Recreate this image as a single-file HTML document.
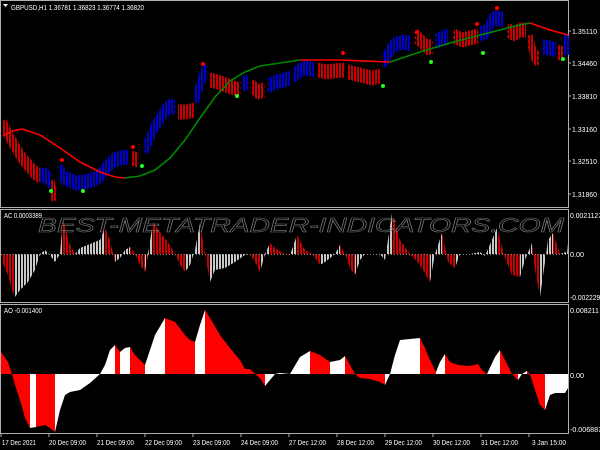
<!DOCTYPE html>
<html><head><meta charset="utf-8"><style>
html,body{margin:0;padding:0;background:#000;}
svg{display:block}
text{font-family:"Liberation Sans",sans-serif;font-size:7.5px;fill:#fff}
</style></head><body>
<svg width="600" height="450" viewBox="0 0 600 450" xmlns="http://www.w3.org/2000/svg">
<defs>
<linearGradient id="aog" gradientUnits="userSpaceOnUse" x1="0" y1="0" x2="600" y2="0">
<stop offset="0" stop-color="#f00"/><stop offset="0.05" stop-color="#f00"/>
<stop offset="0.05" stop-color="#fff"/><stop offset="0.06" stop-color="#fff"/>
<stop offset="0.06" stop-color="#f00"/><stop offset="0.0917" stop-color="#f00"/>
<stop offset="0.0917" stop-color="#fff"/><stop offset="0.1917" stop-color="#fff"/>
<stop offset="0.1917" stop-color="#f00"/><stop offset="0.2" stop-color="#f00"/>
<stop offset="0.2" stop-color="#fff"/><stop offset="0.2167" stop-color="#fff"/>
<stop offset="0.2167" stop-color="#f00"/><stop offset="0.2417" stop-color="#f00"/>
<stop offset="0.2417" stop-color="#fff"/><stop offset="0.275" stop-color="#fff"/>
<stop offset="0.275" stop-color="#f00"/><stop offset="0.325" stop-color="#f00"/>
<stop offset="0.325" stop-color="#fff"/><stop offset="0.3417" stop-color="#fff"/>
<stop offset="0.3417" stop-color="#f00"/><stop offset="0.4417" stop-color="#f00"/>
<stop offset="0.4417" stop-color="#fff"/><stop offset="0.5167" stop-color="#fff"/>
<stop offset="0.5167" stop-color="#f00"/><stop offset="0.55" stop-color="#f00"/>
<stop offset="0.55" stop-color="#fff"/><stop offset="0.575" stop-color="#fff"/>
<stop offset="0.575" stop-color="#f00"/><stop offset="0.6417" stop-color="#f00"/>
<stop offset="0.6417" stop-color="#fff"/><stop offset="0.7" stop-color="#fff"/>
<stop offset="0.7" stop-color="#f00"/><stop offset="0.7267" stop-color="#f00"/>
<stop offset="0.7267" stop-color="#fff"/><stop offset="0.7417" stop-color="#fff"/>
<stop offset="0.7417" stop-color="#f00"/><stop offset="0.8117" stop-color="#f00"/>
<stop offset="0.8117" stop-color="#fff"/><stop offset="0.8333" stop-color="#fff"/>
<stop offset="0.8333" stop-color="#f00"/><stop offset="0.8633" stop-color="#f00"/>
<stop offset="0.8633" stop-color="#fff"/><stop offset="0.8783" stop-color="#fff"/>
<stop offset="0.8783" stop-color="#f00"/><stop offset="0.9083" stop-color="#f00"/>
<stop offset="0.9083" stop-color="#fff"/><stop offset="1" stop-color="#fff"/>
</linearGradient>
<linearGradient id="acg" gradientUnits="userSpaceOnUse" x1="0" y1="0" x2="600" y2="0">
<stop offset="0" stop-color="#c00"/><stop offset="0.025" stop-color="#c00"/>
<stop offset="0.025" stop-color="#c8c8c8"/><stop offset="0.105" stop-color="#c8c8c8"/>
<stop offset="0.105" stop-color="#c00"/><stop offset="0.125" stop-color="#c00"/>
<stop offset="0.125" stop-color="#c8c8c8"/><stop offset="0.175" stop-color="#c8c8c8"/>
<stop offset="0.175" stop-color="#c00"/><stop offset="0.1917" stop-color="#c00"/>
<stop offset="0.1917" stop-color="#c8c8c8"/><stop offset="0.2167" stop-color="#c8c8c8"/>
<stop offset="0.2167" stop-color="#c00"/><stop offset="0.2417" stop-color="#c00"/>
<stop offset="0.2417" stop-color="#c8c8c8"/><stop offset="0.255" stop-color="#c8c8c8"/>
<stop offset="0.255" stop-color="#c00"/><stop offset="0.3083" stop-color="#c00"/>
<stop offset="0.3083" stop-color="#c8c8c8"/><stop offset="0.3333" stop-color="#c8c8c8"/>
<stop offset="0.3333" stop-color="#c00"/><stop offset="0.35" stop-color="#c00"/>
<stop offset="0.35" stop-color="#c8c8c8"/><stop offset="0.4167" stop-color="#c8c8c8"/>
<stop offset="0.4167" stop-color="#c00"/><stop offset="0.4333" stop-color="#c00"/>
<stop offset="0.4333" stop-color="#c8c8c8"/><stop offset="0.45" stop-color="#c8c8c8"/>
<stop offset="0.45" stop-color="#c00"/><stop offset="0.4833" stop-color="#c00"/>
<stop offset="0.4833" stop-color="#c8c8c8"/><stop offset="0.495" stop-color="#c8c8c8"/>
<stop offset="0.495" stop-color="#c00"/><stop offset="0.5333" stop-color="#c00"/>
<stop offset="0.5333" stop-color="#c8c8c8"/><stop offset="0.5667" stop-color="#c8c8c8"/>
<stop offset="0.5667" stop-color="#c00"/><stop offset="0.5917" stop-color="#c00"/>
<stop offset="0.5917" stop-color="#c8c8c8"/><stop offset="0.6533" stop-color="#c8c8c8"/>
<stop offset="0.6533" stop-color="#c00"/><stop offset="0.7167" stop-color="#c00"/>
<stop offset="0.7167" stop-color="#c8c8c8"/><stop offset="0.7367" stop-color="#c8c8c8"/>
<stop offset="0.7367" stop-color="#c00"/><stop offset="0.7583" stop-color="#c00"/>
<stop offset="0.7583" stop-color="#c8c8c8"/><stop offset="0.8283" stop-color="#c8c8c8"/>
<stop offset="0.8283" stop-color="#c00"/><stop offset="0.8667" stop-color="#c00"/>
<stop offset="0.8667" stop-color="#c8c8c8"/><stop offset="0.8867" stop-color="#c8c8c8"/>
<stop offset="0.8867" stop-color="#c00"/><stop offset="0.9" stop-color="#c00"/>
<stop offset="0.9" stop-color="#c8c8c8"/><stop offset="0.9217" stop-color="#c8c8c8"/>
<stop offset="0.9217" stop-color="#c00"/><stop offset="0.9333" stop-color="#c00"/>
<stop offset="0.9333" stop-color="#c8c8c8"/><stop offset="1" stop-color="#c8c8c8"/>
</linearGradient>
<pattern id="gap" width="3" height="10" patternUnits="userSpaceOnUse"><rect x="2" y="0" width="1" height="10" fill="#000"/></pattern>
<g id="bars" fill="none" stroke-linejoin="bevel">
<polyline stroke="#c00" points="4,125 10,138 16,148 22,158 28,165 34,172 40,176"/>
<polyline stroke="#00c" points="40,176 46,175 50,182"/>
<polyline stroke="#c00" points="52,185 54,196"/>
<polyline stroke="#00c" points="60,170 64,178 70,180 76,183 84,182 92,180 100,176 106,168 114,160 120,158 128,157"/>
<polyline stroke="#c00" points="132,158 138,160"/>
<polyline stroke="#00c" points="146,148 150,138 154,128 158,122 164,112 170,106 175,108"/>
<polyline stroke="#c00" points="178,112 186,112 194,110"/>
<polyline stroke="#00c" points="196,98 199,88 202,78 206,70"/>
<polyline stroke="#c00" points="210,80 218,82 226,85 234,88 240,90"/>
<polyline stroke="#00c" points="242,84 248,82"/>
<polyline stroke="#c00" points="252,86 258,92 264,90"/>
<polyline stroke="#00c" points="268,86 276,82 284,80 290,78"/>
<polyline stroke="#00c" points="294,76 300,70 306,68 314,70"/>
<polyline stroke="#c00" points="318,70 326,72 334,71 344,70"/>
<polyline stroke="#c00" points="348,72 356,74 364,76 372,78 380,76"/>
<polyline stroke="#00c" points="384,62 390,50 396,44 404,42 410,44"/>
<polyline stroke="#c00" points="416,36 422,42 428,48 432,46"/>
<polyline stroke="#00c" points="436,42 442,38 448,36"/>
<polyline stroke="#c00" points="454,36 462,40 470,38 478,36"/>
<polyline stroke="#00c" points="480,34 486,32 492,20 496,18 504,20"/>
<polyline stroke="#c00" points="508,30 514,34 520,30 526,30"/>
<polyline stroke="#c00" points="530,40 534,55 538,60"/>
<polyline stroke="#00c" points="542,47 550,48 556,50"/>
<polyline stroke="#c00" points="558,52 563,54"/>
<polyline stroke="#00c" points="566,40 567,50"/>
</g>
</defs>

<!-- frames -->
<g stroke="#b0b0b0" stroke-width="1" fill="none">
<rect x="0.5" y="0.5" width="568" height="207"/>
<rect x="0.5" y="209.5" width="568" height="93"/>
<rect x="0.5" y="304.5" width="568" height="129"/>
</g>

<!-- price bars as vertical bands -->
<g stroke-width="5">
<use href="#bars" transform="translate(0,-5)"/>
<use href="#bars"/>
<use href="#bars" transform="translate(0,5)"/>
</g>
<rect x="1" y="1" width="567" height="206" fill="url(#gap)"/>
<!-- MA -->
<g fill="none" stroke-width="1.6">
<polyline stroke="#f00" points="3,136 12,131 22,129 40,135 60,148 80,162 100,172 115,177 125,178"/>
<polyline stroke="#080" points="125,178 140,176 155,170 170,158 185,140 200,118 215,97 230,81 245,72 260,66 280,63 300,60"/>
<polyline stroke="#f00" points="300,60 340,60 390,62"/>
<polyline stroke="#080" points="390,62 420,52 450,43 480,35 500,30 515,26 530,23"/>
<polyline stroke="#f00" points="530,23 550,30 568,35"/>
</g>
<!-- dots -->
<g fill="#f00"><circle cx="62" cy="160" r="2"/><circle cx="133" cy="147" r="2"/><circle cx="203" cy="64" r="2"/><circle cx="343" cy="53" r="2"/><circle cx="417" cy="32" r="2"/><circle cx="477" cy="24" r="2"/><circle cx="497" cy="8" r="2"/></g>
<g fill="#2f2"><circle cx="51" cy="191" r="2"/><circle cx="83" cy="191" r="2"/><circle cx="142" cy="166" r="2"/><circle cx="237" cy="96" r="2"/><circle cx="383" cy="86" r="2"/><circle cx="431" cy="62" r="2"/><circle cx="483" cy="53" r="2"/><circle cx="563" cy="59" r="2"/></g>

<path d="M3,4 L8,4 L5.5,7 Z" fill="#fff"/>
<text x="11" y="10" textLength="133" lengthAdjust="spacingAndGlyphs">GBPUSD,H1  1.36781 1.36823 1.36774 1.36820</text>

<!-- AC -->
<polygon fill="url(#acg)" points="2,254 2,262 8,275 12,290 15,297 20,290 28,282 35,270 40,254 45,250 50,255 55,262 60,254 63,220 70,245 75,254 80,248 90,244 100,240 105,228 110,240 115,262 120,258 125,250 130,247 135,254 140,265 145,272 148,254 153,222 160,232 170,245 175,254 180,265 185,272 190,265 195,250 200,223 205,254 210,282 215,270 225,268 235,262 245,255 250,254 255,262 260,272 265,254 270,243 275,248 285,254 290,255 297,235 305,250 312,254 320,265 325,262 335,254 340,245 345,254 350,268 355,275 360,260 365,254 380,254 385,260 392,213 400,240 410,254 420,265 430,282 435,254 442,233 448,262 455,268 460,254 470,254 480,252 485,256 497,228 505,258 512,275 520,277 525,260 532,243 535,270 540,297 545,262 548,240 553,233 560,254 566,252 567,243 568,254"/>
<rect x="0" y="210" width="568" height="92" fill="url(#gap)"/>
<line x1="1" y1="254.5" x2="568" y2="254.5" stroke="#888" stroke-dasharray="1,2"/>
<text x="38" y="232" style="font-size:20px;font-style:italic;fill:none;stroke:#777;stroke-width:0.6" textLength="526" lengthAdjust="spacingAndGlyphs">BEST-METATRADER-INDICATORS.COM</text>
<text x="4" y="218" textLength="38" lengthAdjust="spacingAndGlyphs">AC 0.0003389</text>

<!-- AO -->
<polygon fill="url(#aog)" points="1,374 1,352 8,362 12,374 15,385 20,400 25,418 30,428 36,427 45,425 50,428 55,432 60,410 65,395 70,392 80,390 90,383 100,374 105,365 110,350 115,345 120,352 125,348 130,347 135,355 145,365 150,350 155,335 165,318 175,322 185,335 190,340 195,342 200,325 205,310 210,318 220,335 230,348 240,360 245,369 250,369 255,374 260,378 265,386 270,380 275,374 280,373 290,374 300,357 310,351 320,355 330,362 340,360 345,356 350,365 355,374 360,378 370,379 380,382 385,385 390,374 395,355 400,340 410,339 420,338 425,348 430,360 436,372 440,362 445,354 450,362 458,365 470,366 478,364 482,370 487,374 495,357 500,350 505,360 512,374 518,380 522,374 527,371 530,374 535,390 540,405 545,410 550,395 555,393 565,393 568,388 568,374"/>
<text x="4" y="313" textLength="38" lengthAdjust="spacingAndGlyphs">AO -0.001400</text>

<!-- right axis -->
<g>
<text x="572" y="34" textLength="25" lengthAdjust="spacingAndGlyphs">1.35110</text>
<text x="572" y="66" textLength="25" lengthAdjust="spacingAndGlyphs">1.34460</text>
<text x="572" y="99" textLength="25" lengthAdjust="spacingAndGlyphs">1.33810</text>
<text x="572" y="132" textLength="25" lengthAdjust="spacingAndGlyphs">1.33160</text>
<text x="572" y="164" textLength="25" lengthAdjust="spacingAndGlyphs">1.32510</text>
<text x="572" y="197" textLength="25" lengthAdjust="spacingAndGlyphs">1.31860</text>
<text x="570" y="218" textLength="32" lengthAdjust="spacingAndGlyphs">0.0021127</text>
<text x="570" y="257" textLength="14" lengthAdjust="spacingAndGlyphs">0.00</text>
<text x="570" y="300" textLength="34" lengthAdjust="spacingAndGlyphs">-0.0022292</text>
<text x="570" y="313" textLength="29" lengthAdjust="spacingAndGlyphs">0.008211</text>
<text x="570" y="378" textLength="14" lengthAdjust="spacingAndGlyphs">0.00</text>
<text x="570" y="432" textLength="32" lengthAdjust="spacingAndGlyphs">-0.006887</text>
</g>
<g stroke="#b0b0b0"><line x1="568" y1="31" x2="571" y2="31"/><line x1="568" y1="63" x2="571" y2="63"/><line x1="568" y1="96" x2="571" y2="96"/><line x1="568" y1="129" x2="571" y2="129"/><line x1="568" y1="161" x2="571" y2="161"/><line x1="568" y1="194" x2="571" y2="194"/></g>
<!-- time axis -->
<g stroke="#b0b0b0"><line x1="1" y1="434" x2="1" y2="437"/><line x1="49" y1="434" x2="49" y2="437"/><line x1="97" y1="434" x2="97" y2="437"/><line x1="145" y1="434" x2="145" y2="437"/><line x1="193" y1="434" x2="193" y2="437"/><line x1="241" y1="434" x2="241" y2="437"/><line x1="289" y1="434" x2="289" y2="437"/><line x1="337" y1="434" x2="337" y2="437"/><line x1="385" y1="434" x2="385" y2="437"/><line x1="433" y1="434" x2="433" y2="437"/><line x1="481" y1="434" x2="481" y2="437"/><line x1="529" y1="434" x2="529" y2="437"/></g>
<g>
<text x="2" y="445" textLength="34" lengthAdjust="spacingAndGlyphs">17 Dec 2021</text>
<text x="49" y="445" textLength="37" lengthAdjust="spacingAndGlyphs">20 Dec 09:00</text>
<text x="97" y="445" textLength="37" lengthAdjust="spacingAndGlyphs">21 Dec 09:00</text>
<text x="145" y="445" textLength="37" lengthAdjust="spacingAndGlyphs">22 Dec 09:00</text>
<text x="193" y="445" textLength="37" lengthAdjust="spacingAndGlyphs">23 Dec 09:00</text>
<text x="241" y="445" textLength="37" lengthAdjust="spacingAndGlyphs">24 Dec 09:00</text>
<text x="289" y="445" textLength="37" lengthAdjust="spacingAndGlyphs">27 Dec 12:00</text>
<text x="337" y="445" textLength="37" lengthAdjust="spacingAndGlyphs">28 Dec 12:00</text>
<text x="385" y="445" textLength="37" lengthAdjust="spacingAndGlyphs">29 Dec 12:00</text>
<text x="433" y="445" textLength="37" lengthAdjust="spacingAndGlyphs">30 Dec 12:00</text>
<text x="481" y="445" textLength="37" lengthAdjust="spacingAndGlyphs">31 Dec 12:00</text>
<text x="532" y="445" textLength="34" lengthAdjust="spacingAndGlyphs">3 Jan 15:00</text>
</g>
</svg>
</body></html>
